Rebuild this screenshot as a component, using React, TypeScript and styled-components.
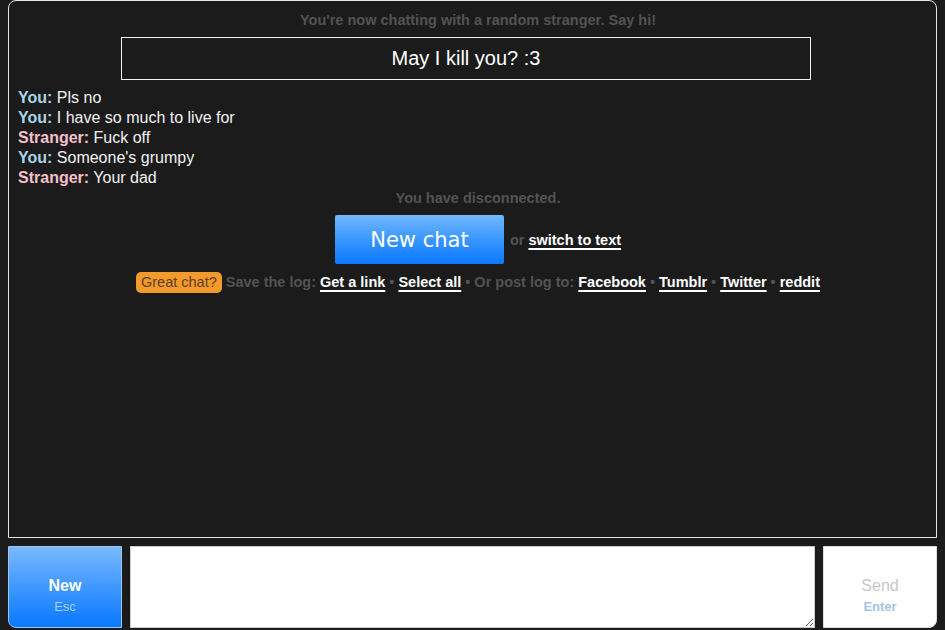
import React from "react";
import styled, { createGlobalStyle } from "styled-components";

const Global = createGlobalStyle`
  html, body { margin: 0; padding: 0; background: #1b1b1b; }
  body { font-family: "Liberation Sans", Arial, sans-serif; }
  * { box-sizing: border-box; }
`;

const Page = styled.div`
  width: 945px;
  height: 630px;
  padding: 0 8px;
  display: flex;
  flex-direction: column;
  gap: 8px;
`;

const ChatBox = styled.div`
  height: 538px;
  border: 1px solid #e6e6e6;
  border-radius: 8px 8px 0 0;
  background: #1b1b1b;
  padding: 9px 9px;
  display: flex;
  flex-direction: column;
`;

const Status = styled.div<{ $mt?: number }>`
  font-size: 14.5px;
  font-weight: bold;
  line-height: 18px;
  color: #535353;
  text-align: center;
  padding-left: 11px;
  margin-top: ${(p) => p.$mt ?? 0}px;
`;

const Question = styled.div`
  margin: 8px 0 0 103px;
  width: 690px;
  height: 43px;
  border: 1px solid #f0f0f0;
  color: #ffffff;
  font-size: 20px;
  display: flex;
  align-items: center;
  justify-content: center;
`;

const Log = styled.div`
  margin-top: 8px;
  display: flex;
  flex-direction: column;
`;

const Line = styled.div`
  font-size: 16px;
  line-height: 20px;
  color: #f2f2f2;
`;

const Who = styled.span<{ $stranger?: boolean }>`
  font-weight: bold;
  color: ${(p) => (p.$stranger ? "#f6c0cb" : "#a9d6e6")};
`;

const ActionRow = styled.div`
  margin-top: 8px;
  display: flex;
  align-items: center;
  justify-content: center;
  padding-left: 11px;
`;

const NewChatButton = styled.button`
  width: 169px;
  height: 49px;
  border: none;
  border-radius: 2px;
  background: linear-gradient(to bottom, #72b8ff 0%, #3a96ff 50%, #0a78ff 100%);
  color: #ffffff;
  font-family: "DejaVu Sans", Verdana, sans-serif;
  font-size: 21px;
  padding: 0;
  margin-right: 6px;
`;

const Muted = styled.span`
  font-size: 14.5px;
  font-weight: bold;
  color: #535353;
`;

const Or = styled(Muted)`
  margin-right: 4px;
`;

const Link = styled.a`
  font-size: 14.5px;
  font-weight: bold;
  color: #ffffff;
  text-decoration: underline;
  text-underline-offset: 3px;
  text-decoration-thickness: 2px;
`;

const LogRow = styled.div`
  margin-top: 8px;
  display: flex;
  align-items: center;
  justify-content: center;
  gap: 4px;
  padding-left: 11px;
  height: 20px;
`;

const Badge = styled.span`
  background: #f39a2c;
  color: #5e4020;
  font-size: 14.5px;
  border-radius: 5px;
  padding: 0 5px;
  height: 21px;
  line-height: 21px;
  display: inline-block;
`;

const Bottom = styled.div`
  height: 82px;
  display: flex;
  gap: 8px;
`;

const SideButton = styled.button<{ $primary?: boolean }>`
  width: 114px;
  height: 82px;
  flex: none;
  display: flex;
  flex-direction: column;
  align-items: center;
  justify-content: center;
  gap: 4px;
  padding: 16px 0 0;
  font-family: "Liberation Sans", Arial, sans-serif;
  border: 1px solid ${(p) => (p.$primary ? "#9cc6ec" : "#dddddd")};
  border-radius: ${(p) => (p.$primary ? "0 0 0 8px" : "0 0 8px 0")};
  background: ${(p) =>
    p.$primary
      ? "linear-gradient(to bottom, #7ab9ff 0%, #3f98ff 50%, #0a78ff 100%)"
      : "#ffffff"};
`;

const BtnLabel = styled.span<{ $primary?: boolean }>`
  font-size: 16px;
  line-height: 18px;
  font-weight: ${(p) => (p.$primary ? "bold" : "normal")};
  color: ${(p) => (p.$primary ? "#ffffff" : "#c8c8c8")};
`;

const BtnKey = styled.span<{ $primary?: boolean }>`
  font-size: 13px;
  line-height: 15px;
  font-weight: ${(p) => (p.$primary ? "normal" : "bold")};
  color: ${(p) => (p.$primary ? "#a6d0ff" : "#a4c4e6")};
`;

const Input = styled.textarea`
  flex: 1;
  height: 82px;
  border: 1px solid #cccccc;
  background: #ffffff;
  resize: both;
  margin: 0;
  font-family: "Liberation Sans", Arial, sans-serif;
`;

const messages: { stranger: boolean; text: string }[] = [
  { stranger: false, text: "Pls no" },
  { stranger: false, text: "I have so much to live for" },
  { stranger: true, text: "Fuck off" },
  { stranger: false, text: "Someone's grumpy" },
  { stranger: true, text: "Your dad" },
];

export default function App() {
  return (
    <>
      <Global />
      <Page>
        <ChatBox>
          <Status $mt={1}>You're now chatting with a random stranger. Say hi!</Status>
          <Question>May I kill you? :3</Question>
          <Log>
            {messages.map((m, i) => (
              <Line key={i}>
                <Who $stranger={m.stranger}>{m.stranger ? "Stranger:" : "You:"}</Who> {m.text}
              </Line>
            ))}
          </Log>
          <Status $mt={1}>You have disconnected.</Status>
          <ActionRow>
            <NewChatButton>New chat</NewChatButton>
            <Or>or</Or>
            <Link>switch to text</Link>
          </ActionRow>
          <LogRow>
            <Badge>Great chat?</Badge>
            <Muted>Save the log:</Muted>
            <Link>Get a link</Link>
            <Muted>•</Muted>
            <Link>Select all</Link>
            <Muted>• Or post log to:</Muted>
            <Link>Facebook</Link>
            <Muted>•</Muted>
            <Link>Tumblr</Link>
            <Muted>•</Muted>
            <Link>Twitter</Link>
            <Muted>•</Muted>
            <Link>reddit</Link>
          </LogRow>
        </ChatBox>
        <Bottom>
          <SideButton $primary>
            <BtnLabel $primary>New</BtnLabel>
            <BtnKey $primary>Esc</BtnKey>
          </SideButton>
          <Input />
          <SideButton>
            <BtnLabel>Send</BtnLabel>
            <BtnKey>Enter</BtnKey>
          </SideButton>
        </Bottom>
      </Page>
    </>
  );
}
